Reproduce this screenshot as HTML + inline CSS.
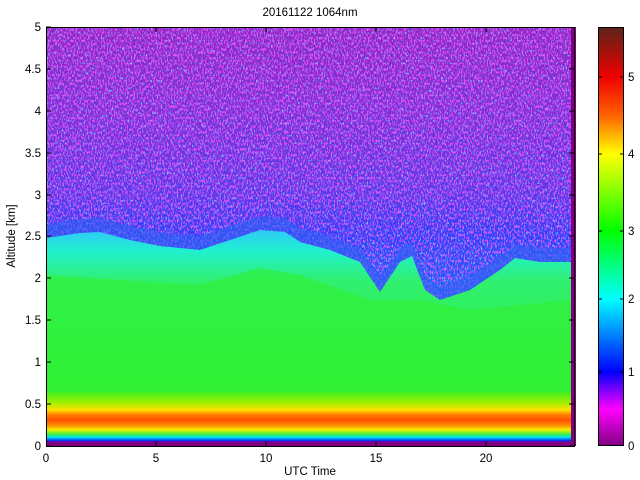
<!DOCTYPE html>
<html><head><meta charset="utf-8"><style>
html,body{margin:0;padding:0;background:#fff;width:640px;height:480px;overflow:hidden}
text{font-family:"Liberation Sans",sans-serif;font-size:11.5px;fill:#000}
</style></head><body>
<svg width="640" height="480" viewBox="0 0 640 480" xmlns="http://www.w3.org/2000/svg">
<defs>
<linearGradient id="cb" x1="0" y1="0" x2="0" y2="1">
<stop offset="0" stop-color="#5a2418"/>
<stop offset="0.119" stop-color="#f00000"/>
<stop offset="0.21" stop-color="#ff6000"/>
<stop offset="0.303" stop-color="#ffff00"/>
<stop offset="0.487" stop-color="#00ff00"/>
<stop offset="0.649" stop-color="#00ffff"/>
<stop offset="0.823" stop-color="#0000ff"/>
<stop offset="0.912" stop-color="#ff00ff"/>
<stop offset="1" stop-color="#800080"/>
</linearGradient>
<linearGradient id="bg" x1="0" y1="0" x2="0" y2="1">
<stop offset="0" stop-color="#8a28c8"/>
<stop offset="0.2" stop-color="#7a30d8"/>
<stop offset="0.4" stop-color="#5a38e8"/>
<stop offset="0.5" stop-color="#3040f8"/>
<stop offset="0.62" stop-color="#2060f8"/>
</linearGradient>
<linearGradient id="cy" x1="0" y1="0" x2="0" y2="1">
<stop offset="0" stop-color="#30c8f8"/>
<stop offset="0.12" stop-color="#20f0d0"/>
<stop offset="0.3" stop-color="#30f070"/>
<stop offset="1" stop-color="#30f030"/>
</linearGradient>
<linearGradient id="low" x1="0" y1="0" x2="0" y2="1">
<stop offset="0" stop-color="#40f020"/>
<stop offset="0.2" stop-color="#a0f000"/>
<stop offset="0.33" stop-color="#ffe000"/>
<stop offset="0.42" stop-color="#ff8000"/>
<stop offset="0.52" stop-color="#ff5000"/>
<stop offset="0.62" stop-color="#ff9000"/>
<stop offset="0.7" stop-color="#f0f000"/>
<stop offset="0.78" stop-color="#40f040"/>
<stop offset="0.84" stop-color="#00e0f0"/>
<stop offset="0.9" stop-color="#0030ff"/>
<stop offset="0.93" stop-color="#800080"/>
<stop offset="1" stop-color="#800080"/>
</linearGradient>
<filter id="nz" x="0" y="0" width="100%" height="100%">
<feTurbulence type="fractalNoise" baseFrequency="0.7 0.35" numOctaves="1" seed="3"/>
<feColorMatrix type="matrix" values="0 0 0 0 1  0 0 0 0 0.1  0 0 0 0 1  0 0 0 7 -3.4"/>
</filter>
<filter id="nz2" x="0" y="0" width="100%" height="100%">
<feTurbulence type="fractalNoise" baseFrequency="0.8 0.4" numOctaves="1" seed="11"/>
<feColorMatrix type="matrix" values="0 0 0 0 0.1  0 0 0 0 0.9  0 0 0 0 1  0 0 0 9 -5.6"/>
</filter>
</defs>
<rect x="46" y="27" width="528" height="419" fill="url(#bg)"/>
<rect x="46" y="27" width="525" height="280" filter="url(#nz)" opacity="0.75"/>
<rect x="46" y="27" width="525" height="300" filter="url(#nz2)" opacity="0.8"/>
<path d="M46,238 L80,233 L100,232 L130,240 L160,246 L200,250 L230,240 L260,230 L285,232 L300,242 L330,250 L360,262 L380,292 L400,262 L412,256 L425,290 L440,300 L470,290 L500,270 L515,258 L540,262 L571,262 L571,400 L46,400 Z" fill="#2a60f4" opacity="0.6" transform="translate(0,-14)"/>
<path d="M46,238 L80,233 L100,232 L130,240 L160,246 L200,250 L230,240 L260,230 L285,232 L300,242 L330,250 L360,262 L380,292 L400,262 L412,256 L425,290 L440,300 L470,290 L500,270 L515,258 L540,262 L571,262 L571,400 L46,400 Z" fill="url(#cy)"/>
<path d="M46,275 L120,280 L200,285 L260,268 L300,275 L370,300 L420,300 L470,310 L571,300 L571,400 L46,400 Z" fill="#30f030" opacity="0.6"/>
<rect x="46" y="392" width="525" height="54" fill="url(#low)"/>
<rect x="571" y="27" width="5" height="419" fill="#800080"/>
<rect x="46.5" y="27.5" width="528" height="419" fill="none" stroke="#000" stroke-width="1"/>
<g stroke="#000" stroke-width="1">
<path d="M46,446h5M46,404h5M46,362h5M46,320h5M46,278h5M46,236h5M46,195h5M46,153h5M46,111h5M46,69h5M46,27h5"/>
<path d="M574,446h-5M574,404h-5M574,362h-5M574,320h-5M574,278h-5M574,236h-5M574,195h-5M574,153h-5M574,111h-5M574,69h-5"/>
<path d="M156,446v-5M266,446v-5M376,446v-5M486,446v-5M156,27v5M266,27v5M376,27v5M486,27v5"/>
</g>
<g text-anchor="end">
<text x="41" y="450">0</text><text x="41" y="408">0.5</text><text x="41" y="366">1</text>
<text x="41" y="324">1.5</text><text x="41" y="282">2</text><text x="41" y="240">2.5</text>
<text x="41" y="199">3</text><text x="41" y="157">3.5</text><text x="41" y="115">4</text>
<text x="41" y="73">4.5</text><text x="41" y="31">5</text>
</g>
<g text-anchor="middle">
<text x="46" y="462">0</text><text x="156" y="462">5</text><text x="266" y="462">10</text>
<text x="376" y="462">15</text><text x="486" y="462">20</text>
<text x="310" y="475">UTC Time</text>
<text x="310" y="16">20161122 1064nm</text>
<text transform="translate(15,236) rotate(-90)">Altitude [km]</text>
</g>
<rect x="598" y="27" width="26" height="419" fill="url(#cb)"/>
<rect x="598.5" y="27.5" width="25" height="418" fill="none" stroke="#000"/>
<g stroke="#000"><path d="M598,77h4M598,154h4M598,231h4M598,299h4M598,372h4M624,77h-4M624,154h-4M624,231h-4M624,299h-4M624,372h-4"/></g>
<text x="628" y="81">5</text><text x="628" y="158">4</text><text x="628" y="235">3</text>
<text x="628" y="303">2</text><text x="628" y="376">1</text><text x="628" y="450">0</text>
</svg>
</body></html>
